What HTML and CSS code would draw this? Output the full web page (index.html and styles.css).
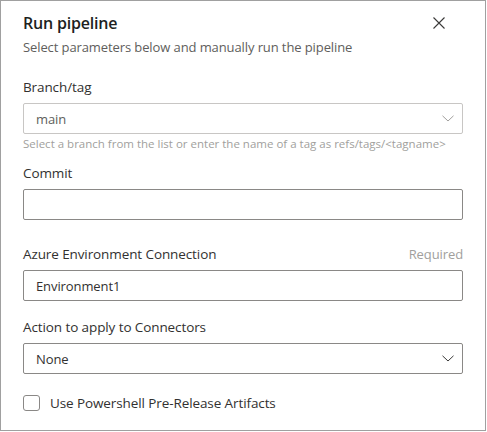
FILE: index.html
```html
<!DOCTYPE html>
<html lang="en">
<head>
<meta charset="utf-8">
<title>Run pipeline</title>
<link rel="stylesheet" href="styles.css">
</head>
<body>
<div class="panel">
  <div class="header">
    <h1 class="title">Run pipeline</h1>
    <button class="close" aria-label="Close">
      <svg width="12" height="12" viewBox="0 0 12 12"><path d="M0.5 0.5 L11.5 11.5 M11.5 0.5 L0.5 11.5" stroke="#3b3a39" stroke-width="1.1" fill="none"/></svg>
    </button>
  </div>
  <p class="subtitle">Select parameters below and manually run the pipeline</p>

  <div class="label label-first">Branch/tag</div>
  <div class="field field-light">
    <span class="value value-light">main</span>
    <svg class="chev" width="12" height="7" viewBox="0 0 12 7"><path d="M0.5 0.8 L6 6 L11.5 0.8" stroke="#a19f9d" stroke-width="1" fill="none"/></svg>
  </div>
  <div class="helper">Select a branch from the list or enter the name of a tag as refs/tags/&lt;tagname&gt;</div>

  <div class="label label-commit">Commit</div>
  <div class="field"></div>

  <div class="label-row label-azure">
    <span class="label-text">Azure Environment Connection</span>
    <span class="required">Required</span>
  </div>
  <div class="field"><span class="value">Environment1</span></div>

  <div class="label label-action">Action to apply to Connectors</div>
  <div class="field">
    <span class="value">None</span>
    <svg class="chev" width="12" height="7" viewBox="0 0 12 7"><path d="M0.5 0.8 L6 6 L11.5 0.8" stroke="#3b3a39" stroke-width="1" fill="none"/></svg>
  </div>

  <div class="check-row">
    <span class="checkbox"></span>
    <span class="check-label">Use Powershell Pre-Release Artifacts</span>
  </div>
</div>
</body>
</html>
```
FILE: styles.css
```css
* { box-sizing: border-box; }
html, body { margin: 0; padding: 0; background: #ffffff; }
body {
  font-family: "Open Sans", "Noto Sans", sans-serif;
  color: #323130;
}
.panel {
  width: 486px;
  height: 431px;
  border: 1px solid #a0a0a0;
  padding: 11px 22px 0 22px;
  background: #fff;
}
.header {
  display: flex;
  justify-content: space-between;
  align-items: center;
  height: 22px;
}
.title {
  margin: 0;
  font-size: 16px;
  font-weight: 600;
  letter-spacing: -0.2px;
  line-height: 22px;
  color: #201f1e;
}
.close {
  border: 0;
  background: none;
  padding: 0;
  margin-right: 18px;
  width: 12px;
  height: 12px;
  display: flex;
}
.subtitle {
  margin: 3px 0 0 0;
  font-size: 13px;
  letter-spacing: -0.1px;
  line-height: 20px;
  color: #605e5c;
}
.label {
  font-size: 13.5px;
  letter-spacing: -0.1px;
  line-height: 20px;
  color: #323130;
}
.label-first { margin-top: 20px; }
.label-commit { margin-top: 11px; }
.label-action { margin-top: 16px; }
.label-row {
  display: flex;
  justify-content: space-between;
  font-size: 13.5px;
  letter-spacing: -0.1px;
  line-height: 20px;
}
.label-azure { margin-top: 24px; }
.required { color: #a19f9d; font-size: 13px; }
.field {
  margin-top: 6px;
  height: 31px;
  border: 1px solid #8a8886;
  border-radius: 2px;
  display: flex;
  align-items: center;
  justify-content: space-between;
  padding: 0 8px 0 12px;
}
.field-light { border-color: #c8c6c4; }
.value {
  font-size: 13px;
  letter-spacing: -0.1px;
  color: #323130;
}
.value-light { color: #605e5c; }
.chev { display: block; }
.helper {
  margin-top: 2px;
  font-size: 11.5px;
  line-height: 16px;
  color: #a19f9d;
  white-space: nowrap;
}
.check-row {
  margin-top: 19px;
  display: flex;
  align-items: center;
  height: 20px;
}
.checkbox {
  width: 17px;
  height: 16px;
  border: 1px solid #8a8886;
  border-radius: 3px;
  margin-right: 10px;
}
.check-label {
  font-size: 13.5px;
  letter-spacing: -0.1px;
  color: #323130;
}
```
